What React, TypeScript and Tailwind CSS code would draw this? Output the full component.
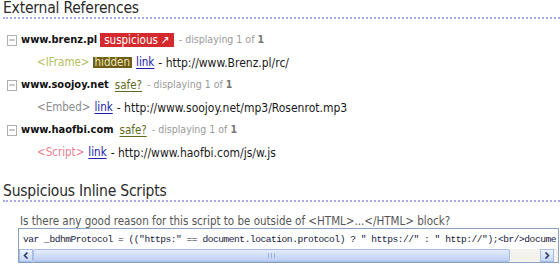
import { Minus } from "lucide-react";

const font = { fontFamily: '"DejaVu Sans Condensed", "DejaVu Sans", sans-serif' };

type Ref = {
  host: string;
  verdict: "suspicious" | "safe";
  tag: string;
  tagClass: string;
  hidden?: boolean;
  url: string;
};

const refs: Ref[] = [
  { host: "www.brenz.pl", verdict: "suspicious", tag: "<IFrame>", tagClass: "text-[#b4c060]", hidden: true, url: "http://www.Brenz.pl/rc/" },
  { host: "www.soojoy.net", verdict: "safe", tag: "<Embed>", tagClass: "text-[#8a8a8a]", url: "http://www.soojoy.net/mp3/Rosenrot.mp3" },
  { host: "www.haofbi.com", verdict: "safe", tag: "<Script>", tagClass: "text-[#e8808e]", url: "http://www.haofbi.com/js/w.js" },
];

function Heading({ children }: { children: string }) {
  return (
    <h2 className="ml-[3px] h-[18px] text-[15.5px] leading-[15px] text-[#2a2a2a] tracking-[-0.2px] border-b-2 border-dotted border-[#a9a9ef]">
      {children}
    </h2>
  );
}

function RefRow({ item }: { item: Ref }) {
  return (
    <>
      <div className="flex items-center h-[22.5px] text-[11.5px]">
        <span className="ml-[7px] w-[10px] h-[11px] border border-[#b0b0b0] flex items-center justify-center bg-white">
          <Minus className="w-[8px] h-[8px] text-[#555]" strokeWidth={2} />
        </span>
        <span className="ml-[4px] font-bold text-[11px] text-[#111]">{item.host}</span>
        {item.verdict === "suspicious" ? (
          <span className="ml-[3px] bg-[#d42a2e] text-white px-[4px] h-[14px] leading-[14px]">suspicious ↗</span>
        ) : (
          <span className="ml-[6px] text-[#5f6b20] underline underline-offset-2">safe?</span>
        )}
        <span className="ml-[5px] text-[10.5px] text-[#9a9a9a]">
          - displaying 1 of <span className="font-bold text-[#777]">1</span>
        </span>
      </div>
      <div className="flex items-center h-[22.5px] text-[11.5px] pl-[37px]">
        <span className={item.tagClass}>{item.tag}</span>
        {item.hidden && (
          <span className="ml-[3px] bg-[#6d5f17] text-[#ece4b8] px-[2px] h-[11px] leading-[11px]">hidden</span>
        )}
        <span className="ml-[4px] text-[#2020b0] underline underline-offset-2">link</span>
        <span className="ml-[4px] text-[#1a1a1a] text-[12px]">- {item.url}</span>
      </div>
    </>
  );
}

export default function App() {
  return (
    <div className="w-[560px] h-[272px] bg-white overflow-hidden pt-[1px]" style={font}>
      <Heading>External References</Heading>
      <div className="mt-[10px]">
        {refs.map((r) => (
          <RefRow key={r.host} item={r} />
        ))}
      </div>

      <div className="mt-[20px]">
        <Heading>Suspicious Inline Scripts</Heading>
      </div>

      <p className="mt-[12px] ml-[20px] text-[11.5px] leading-[14px] text-[#555]">
        Is there any good reason for this script to be outside of &lt;HTML&gt;...&lt;/HTML&gt; block?
      </p>

      <div className="ml-[18px] w-[541px] border border-[#8aa2c4] bg-white">
        <div
          className="h-[20px] pl-[4px] pt-[5px] whitespace-nowrap overflow-hidden text-[9.6px] leading-[11px] text-[#1a1a40] tracking-[-0.48px]"
          style={{ fontFamily: '"Liberation Mono", monospace' }}
        >
          var _bdhmProtocol = (("https:" == document.location.protocol) ? " https://" : " http://");&lt;br/&gt;docume
        </div>
        <div className="flex h-[13px] bg-[#f3f2ec]">
          <div className="w-[14px] border border-[#a8bde4] bg-gradient-to-b from-[#eef3fd] to-[#c6d6f5] flex items-center justify-center">
            <svg width="6" height="7" viewBox="0 0 6 7"><path d="M4.5 0.5 L1.5 3.5 L4.5 6.5" fill="none" stroke="#2a3c70" strokeWidth="1.6" /></svg>
          </div>
          <div className="w-[477px] border border-[#a8bde4] rounded-[2px] bg-gradient-to-b from-[#e4ecfc] to-[#bccff3] flex items-center justify-center">
            <div className="w-[7px] h-[5px] border-x border-[#9cb0dc] flex justify-center">
              <div className="w-[1px] h-full bg-[#9cb0dc]" />
            </div>
          </div>
          <div className="flex-1" />
          <div className="w-[14px] border border-[#a8bde4] bg-gradient-to-b from-[#eef3fd] to-[#c6d6f5] flex items-center justify-center mr-[4px]">
            <svg width="6" height="7" viewBox="0 0 6 7"><path d="M1.5 0.5 L4.5 3.5 L1.5 6.5" fill="none" stroke="#2a3c70" strokeWidth="1.6" /></svg>
          </div>
        </div>
      </div>
    </div>
  );
}
